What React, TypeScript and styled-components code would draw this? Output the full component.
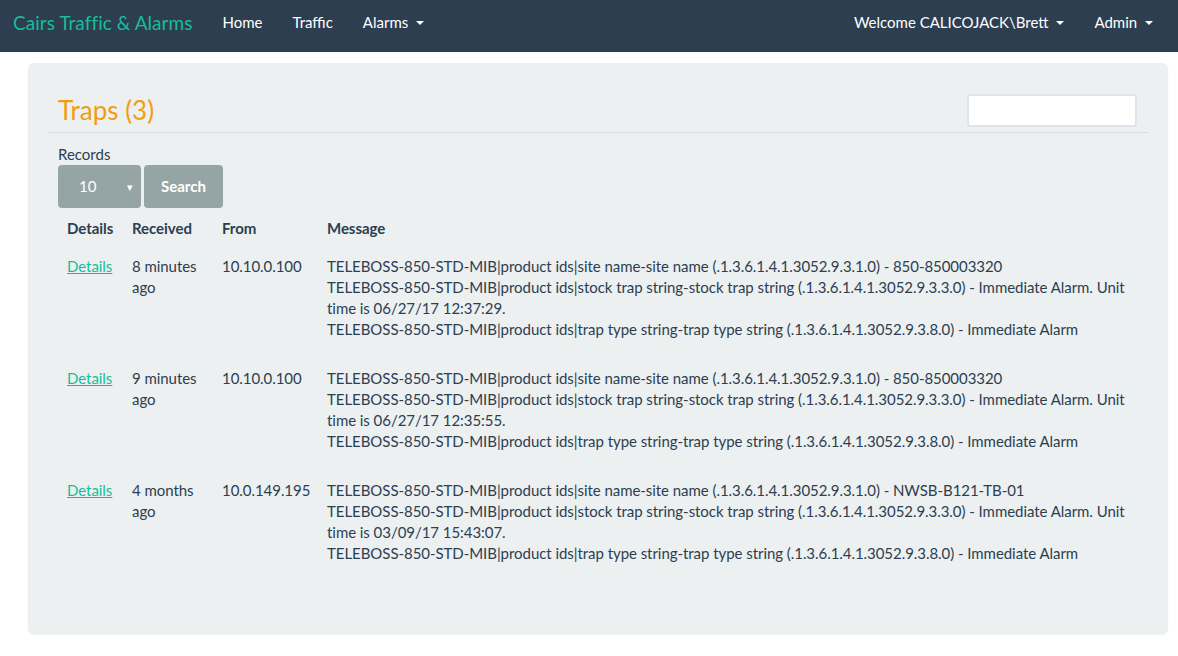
import { createGlobalStyle, styled } from "styled-components";

type Trap = {
  received: string;
  from: string;
  lines: string[];
};

const traps: Trap[] = [
  {
    received: "8 minutes ago",
    from: "10.10.0.100",
    lines: [
      "TELEBOSS-850-STD-MIB|product ids|site name-site name (.1.3.6.1.4.1.3052.9.3.1.0) - 850-850003320",
      "TELEBOSS-850-STD-MIB|product ids|stock trap string-stock trap string (.1.3.6.1.4.1.3052.9.3.3.0) - Immediate Alarm. Unit time is 06/27/17 12:37:29.",
      "TELEBOSS-850-STD-MIB|product ids|trap type string-trap type string (.1.3.6.1.4.1.3052.9.3.8.0) - Immediate Alarm",
    ],
  },
  {
    received: "9 minutes ago",
    from: "10.10.0.100",
    lines: [
      "TELEBOSS-850-STD-MIB|product ids|site name-site name (.1.3.6.1.4.1.3052.9.3.1.0) - 850-850003320",
      "TELEBOSS-850-STD-MIB|product ids|stock trap string-stock trap string (.1.3.6.1.4.1.3052.9.3.3.0) - Immediate Alarm. Unit time is 06/27/17 12:35:55.",
      "TELEBOSS-850-STD-MIB|product ids|trap type string-trap type string (.1.3.6.1.4.1.3052.9.3.8.0) - Immediate Alarm",
    ],
  },
  {
    received: "4 months ago",
    from: "10.0.149.195",
    lines: [
      "TELEBOSS-850-STD-MIB|product ids|site name-site name (.1.3.6.1.4.1.3052.9.3.1.0) - NWSB-B121-TB-01",
      "TELEBOSS-850-STD-MIB|product ids|stock trap string-stock trap string (.1.3.6.1.4.1.3052.9.3.3.0) - Immediate Alarm. Unit time is 03/09/17 15:43:07.",
      "TELEBOSS-850-STD-MIB|product ids|trap type string-trap type string (.1.3.6.1.4.1.3052.9.3.8.0) - Immediate Alarm",
    ],
  },
];

const App = () => {
  return (
    <>
      <GlobalStyle />
      <Navbar>
        <NavLeft>
          <Brand>Cairs Traffic &amp; Alarms</Brand>
          <NavLink>Home</NavLink>
          <NavLink>Traffic</NavLink>
          <NavLink>
            Alarms <Caret />
          </NavLink>
        </NavLeft>
        <NavRight>
          <NavLink>
            Welcome CALICOJACK\Brett <Caret />
          </NavLink>
          <NavLink>
            Admin <Caret />
          </NavLink>
        </NavRight>
      </Navbar>

      <Page>
        <Well>
          <Header>
            <Title>Traps (3)</Title>
            <FilterInput />
          </Header>

          <Label>Records</Label>
          <Controls>
            <SelectBtn>
              <span>10</span>
              <SelectArrow>▾</SelectArrow>
            </SelectBtn>
            <SearchBtn>Search</SearchBtn>
          </Controls>

          <Table>
            <colgroup>
              <col style={{ width: 66 }} />
              <col style={{ width: 90 }} />
              <col style={{ width: 105 }} />
              <col />
            </colgroup>
            <thead>
              <tr>
                <Th>Details</Th>
                <Th>Received</Th>
                <Th>From</Th>
                <Th>Message</Th>
              </tr>
            </thead>
            <tbody>
              {traps.map((t, i) => (
                <tr key={i}>
                  <Td>
                    <DetailsLink href="#">Details</DetailsLink>
                  </Td>
                  <Td>{t.received}</Td>
                  <Td $nowrap>{t.from}</Td>
                  <Td>
                    {t.lines.map((l, j) => (
                      <div key={j}>{l}</div>
                    ))}
                  </Td>
                </tr>
              ))}
            </tbody>
          </Table>
        </Well>
      </Page>
    </>
  );
};

export default App;

const GlobalStyle = createGlobalStyle`
  * {
    box-sizing: border-box;
  }
  body {
    margin: 0;
    background: #fff;
    color: #2c3e50;
    font-family: Lato, "Open Sans", sans-serif;
    font-size: 15px;
    line-height: 21px;
  }
`;

const Navbar = styled.nav`
  height: 52px;
  background: #2c3e50;
  display: flex;
  justify-content: space-between;
  align-items: center;
  padding: 0 10px 0 13px;
`;

const NavLeft = styled.div`
  display: flex;
  align-items: center;
`;

const NavRight = styled.div`
  display: flex;
  align-items: center;
`;

const Brand = styled.a`
  color: #18bc9c;
  font-size: 19px;
  line-height: 21px;
  letter-spacing: 0.05px;
  padding: 0 15px 8px 0;
`;

const NavLink = styled.a`
  color: #fff;
  font-size: 15px;
  line-height: 21px;
  padding: 0 15px 7px;
  display: flex;
  align-items: center;
  white-space: pre;
`;

const Caret = styled.span`
  display: inline-block;
  width: 0;
  height: 0;
  margin-left: 4px;
  margin-top: 1px;
  border-top: 4px solid #fff;
  border-left: 4px solid transparent;
  border-right: 4px solid transparent;
`;

const Page = styled.main`
  padding: 11px 10px 22px 28px;
`;

const Well = styled.section`
  width: 1140px;
  background: #ecf0f1;
  border-radius: 6px;
  padding: 30px 30px 50px;
  box-shadow: 0 1px 2px rgba(0, 0, 0, 0.06);
`;

const Header = styled.div`
  display: flex;
  justify-content: space-between;
  align-items: center;
  margin: 0 -10px;
  padding: 0 11px 4px 10px;
  border-bottom: 1px solid #d8dddf;
`;

const Title = styled.h1`
  margin: 0;
  color: #f39c12;
  font-size: 26px;
  font-weight: 400;
  line-height: 35px;
`;

const FilterInput = styled.input`
  width: 170px;
  height: 33px;
  border: 2px solid #dce4ec;
  border-radius: 3px;
  background: #fff;
  outline: none;
`;

const Label = styled.div`
  margin-top: 11px;
  color: #2c3e50;
`;

const Controls = styled.div`
  display: flex;
  gap: 3px;
`;

const Button = styled.button`
  height: 43px;
  border: none;
  border-radius: 4px;
  background: #95a5a6;
  color: #fff;
  font-family: Lato, "Open Sans", sans-serif;
  font-size: 15px;
  line-height: 21px;
`;

const SelectBtn = styled(Button)`
  width: 83px;
  display: flex;
  align-items: center;
  padding: 0 8px 0 21px;
  justify-content: space-between;
`;

const SelectArrow = styled.span`
  font-size: 11px;
`;

const SearchBtn = styled(Button)`
  width: 79px;
  font-weight: 700;
`;

const Table = styled.table`
  width: 1080px;
  margin-top: 2px;
  table-layout: fixed;
  border-collapse: collapse;
  letter-spacing: -0.05px;
`;

const Th = styled.th`
  text-align: left;
  font-weight: 700;
  padding: 8px;
  border-bottom: 1px solid #ecf0f1;
  vertical-align: bottom;

  &:first-child {
    padding-left: 9px;
  }
`;

const Td = styled.td<{ $nowrap?: boolean }>`
  padding: 8px 8px 20px;
  vertical-align: top;
  white-space: ${(p) => (p.$nowrap ? "nowrap" : "normal")};

  &:first-child {
    padding-left: 9px;
  }
`;

const DetailsLink = styled.a`
  color: #18bc9c;
  text-decoration: underline;
`;
